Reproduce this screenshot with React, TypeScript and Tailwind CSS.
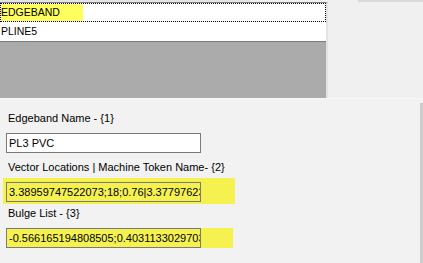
import React from "react";

const App: React.FC = () => {
  const rows = ["EDGEBAND", "PLINE5"];

  return (
    <div
      className="w-[423px] h-[263px] bg-[#f0f0f0] overflow-hidden flex flex-col text-black"
      style={{ fontFamily: '"Liberation Sans", Arial, sans-serif' }}
    >
      {/* top edge of the form */}
      <div className="flex h-[2px] shrink-0">
        <div className="w-[250px] bg-[#e4e4e4]" />
        <div className="w-[108px]" />
        <div className="flex-1 bg-[#dadada]" />
      </div>

      {/* list box */}
      <div className="flex shrink-0">
        <div className="w-[328px] border-t border-[#7f7f7f] border-r-2 border-r-[#e3e3e3]">
          <div className="bg-white">
            {rows.map((row, i) => (
              <div
                key={row}
                className={`h-[19px] flex items-stretch text-[10.5px] leading-none ${
                  i === 0 ? "border border-dotted border-black" : "px-px"
                }`}
              >
                <span
                  className={`flex items-center w-[82px] ${
                    i === 0 ? "bg-[#ffff5e]" : ""
                  }`}
                >
                  {row}
                </span>
              </div>
            ))}
          </div>
          <div className="h-[57px] bg-[#ababab] border-t border-[#7a7a7a]" />
        </div>
      </div>
      <div className="h-px bg-[#f9f9f9] shrink-0" />

      {/* fields */}
      <div className="flex flex-1 bg-[#f2f2f2]">
        <div className="flex-1 flex flex-col text-[11px]">
          <div className="mt-[13px] ml-[8px] leading-[13px]">Edgeband Name - {"{1}"}</div>
          <div className="mt-[8px] ml-[6px] w-[195px] h-[20px] bg-white border border-[#7a7a7a] flex items-center pl-[2px] whitespace-nowrap overflow-hidden">
            PL3 PVC
          </div>
          <div className="mt-[8px] ml-[8px] leading-[13px]">
            Vector Locations | Machine Token Name- {"{2}"}
          </div>
          <div className="mt-[4px] ml-[3px] w-[232px] h-[26px] bg-[#f5f250] pt-[4px] pl-[3px]">
            <div className="w-[195px] h-[20px] border border-[#7a7a7a] flex items-center pl-[2px] whitespace-nowrap overflow-hidden">
              3.38959747522073;18;0.76|3.37797623;18;0.76
            </div>
          </div>
          <div className="mt-[3px] ml-[8px] leading-[13px]">Bulge List - {"{3}"}</div>
          <div className="mt-[8px] ml-[6px] w-[227px] h-[20px] bg-[#f5f250]">
            <div className="w-[195px] h-[20px] border border-[#7a7a7a] flex items-center pl-[2px] whitespace-nowrap overflow-hidden">
              -0.566165194808505;0.403113302970355
            </div>
          </div>
        </div>
        <div className="w-[3px] mt-[4px] bg-[#cdcdcd]" />
      </div>
    </div>
  );
};

export default App;
